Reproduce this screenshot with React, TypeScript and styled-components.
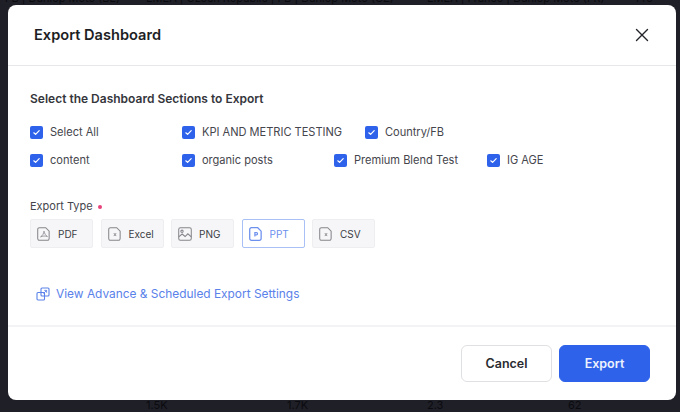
import React from "react";
import styled, { createGlobalStyle } from "styled-components";

const GlobalStyle = createGlobalStyle`
  html, body {
    margin: 0;
    padding: 0;
    width: 680px;
    height: 412px;
    overflow: hidden;
    background: #1f1f27;
    font-family: Inter, "Liberation Sans", sans-serif;
  }
`;

const Page = styled.div`
  position: relative;
  width: 680px;
  height: 412px;
  padding: 5px 0 0 8px;
  box-sizing: border-box;
  overflow: hidden;
  background: #1f1f27;
`;

const BackdropText = styled.span<{ $x: number; $y: number }>`
  position: absolute;
  left: ${(p) => p.$x}px;
  top: ${(p) => p.$y}px;
  font-size: 11px;
  line-height: 14px;
  color: #0b0b0f;
  white-space: nowrap;
`;

const Modal = styled.div`
  position: relative;
  width: 668px;
  height: 395px;
  background: #fff;
  border-radius: 8px;
  display: flex;
  flex-direction: column;
`;

const Header = styled.header`
  height: 61px;
  flex: none;
  box-sizing: border-box;
  padding: 0 26px;
  display: flex;
  align-items: center;
  justify-content: space-between;
  border-bottom: 1px solid #e6e7ea;
`;

const Title = styled.h2`
  margin: 0;
  font-size: 14.6px;
  font-weight: 600;
  color: #1d1e24;
`;

const CloseButton = styled.button`
  width: 16px;
  height: 16px;
  padding: 0;
  border: 0;
  background: none;
  display: flex;
  color: #23242a;
`;

const Body = styled.div`
  flex: 1;
  padding: 25px 22px 0;
  display: flex;
  flex-direction: column;
`;

const SectionTitle = styled.h3`
  margin: 0 0 19px;
  font-size: 12px;
  line-height: 15px;
  font-weight: 600;
  color: #35363c;
`;

const CheckRow = styled.div`
  display: flex;
  height: 14px;
  margin-bottom: 14px;
`;

const CheckItem = styled.label<{ $width?: number }>`
  display: flex;
  align-items: center;
  gap: 7px;
  width: ${(p) => (p.$width ? `${p.$width}px` : "auto")};
  font-size: 11.05px;
  color: #45464d;
  white-space: nowrap;
`;

const CheckBox = styled.span`
  width: 13px;
  height: 13px;
  flex: none;
  border-radius: 2px;
  background: #2e62ea;
  display: flex;
  align-items: center;
  justify-content: center;
`;

const FieldLabel = styled.div`
  margin-top: 18px;
  font-size: 11px;
  line-height: 14px;
  color: #45464d;
  display: flex;
  align-items: center;
  gap: 5px;
`;

const RequiredDot = styled.span`
  width: 4px;
  height: 4px;
  border-radius: 50%;
  background: #e8437a;
  margin-top: 2px;
`;

const TypeRow = styled.div`
  display: flex;
  gap: 7.5px;
  margin-top: 6px;
`;

const TypeButton = styled.div<{ $active?: boolean }>`
  width: 63px;
  height: 29px;
  box-sizing: border-box;
  padding-left: 5px;
  display: flex;
  align-items: center;
  gap: 6px;
  border-radius: 2px;
  font-size: 10px;
  background: ${(p) => (p.$active ? "#fff" : "#f6f6f8")};
  border: 1px solid ${(p) => (p.$active ? "#a8c0f5" : "#eeeef1")};
  color: ${(p) => (p.$active ? "#6c90ee" : "#3c3d44")};
`;

const IconSvg = styled.svg<{ $active?: boolean }>`
  flex: none;
  opacity: ${(p) => (p.$active ? 1 : 0.6)};
`;

const LinkRow = styled.a`
  margin: 38px 0 0 6px;
  display: flex;
  align-items: center;
  gap: 6px;
  font-size: 11.9px;
  line-height: 16px;
  color: #5a82ea;
`;

const Footer = styled.footer`
  height: 75px;
  flex: none;
  box-sizing: border-box;
  padding: 18px 26px 0 0;
  display: flex;
  justify-content: flex-end;
  gap: 7px;
  border-top: 2px solid #f3f3f5;
`;

const ActionButton = styled.button<{ $primary?: boolean }>`
  width: 91px;
  height: 37px;
  box-sizing: border-box;
  border-radius: 6px;
  font-family: inherit;
  font-size: 12.5px;
  font-weight: 600;
  border: 1px solid ${(p) => (p.$primary ? "#2e62ea" : "#dfe0e3")};
  background: ${(p) => (p.$primary ? "#2e62ea" : "#fff")};
  color: ${(p) => (p.$primary ? "#eef2fd" : "#2a2b31")};
`;

const CheckMark = () => (
  <svg width="9" height="9" viewBox="0 0 9 9" fill="none">
    <path d="M1.8 4.8 3.6 6.4 7.2 2.6" stroke="#fff" strokeWidth="1.2" strokeLinecap="round" strokeLinejoin="round" />
  </svg>
);

const FileIcon = ({ kind }: { kind: string }) => (
  <IconSvg $active={kind === "P"} width="16" height="16" viewBox="0 0 14 14" fill="none" stroke="currentColor" strokeWidth={kind === "P" ? 1.1 : 0.9}>
    {kind === "img" ? (
      <>
        <rect x="1.5" y="1.5" width="11" height="11" rx="1.5" />
        <circle cx="4.4" cy="4.6" r="1" />
        <path d="M1.5 9.5 4.5 7l2.6 2.2L9.5 6.8l3 2.8" />
      </>
    ) : (
      <>
        <path d="M3 1.5h5.5l3 3V11a1.5 1.5 0 0 1-1.5 1.5H3A1.5 1.5 0 0 1 1.5 11V3A1.5 1.5 0 0 1 3 1.5Z" />
        {kind === "pdf" && <path d="M7 4.5c-.2 2-1.2 4-3 5 1.8-.8 4-1 6-.3-1.4-.9-2.7-2.6-3-4.7Z" strokeWidth=".7" />}
        {kind === "x" && <path d="m6 6.2 2 2.6m0-2.6-2 2.6" strokeWidth=".8" />}
        {kind === "P" && <path d="M6 9.2V5.8h1.4a1 1 0 0 1 0 2H6" strokeWidth="1" />}
      </>
    )}
  </IconSvg>
);

const ExternalIcon = () => (
  <svg width="14" height="14" viewBox="0 0 14 14" fill="none" stroke="#5a82ea" strokeWidth="1.1">
    <rect x="5" y="1" width="8" height="8" rx="1" />
    <rect x="1" y="5.5" width="7.5" height="7.5" rx="1" />
    <path d="M7.5 6.5 10.5 3.5M8.3 3.4h2.3v2.3" strokeWidth=".9" />
  </svg>
);

const rows = [
  [
    { label: "Select All", width: 152 },
    { label: "KPI AND METRIC TESTING", width: 183 },
    { label: "Country/FB" },
  ],
  [
    { label: "content", width: 152 },
    { label: "organic posts", width: 152 },
    { label: "Premium Blend Test", width: 153 },
    { label: "IG AGE" },
  ],
];

const exportTypes = [
  { label: "PDF", icon: "pdf" },
  { label: "Excel", icon: "x" },
  { label: "PNG", icon: "img" },
  { label: "PPT", icon: "P", active: true },
  { label: "CSV", icon: "x" },
];

export default function App() {
  return (
    <Page>
      <GlobalStyle />
      <BackdropText $x={5} $y={-9}>FB | Dunlop Moto (BE)</BackdropText>
      <BackdropText $x={146} $y={-9}>EMEA | Czech Republic | FB | Dunlop Moto (CZ)</BackdropText>
      <BackdropText $x={427} $y={-9}>EMEA | France | Dunlop Moto (FR)</BackdropText>
      <BackdropText $x={636} $y={-9}>Fro</BackdropText>
      <BackdropText $x={146} $y={398}>1.5K</BackdropText>
      <BackdropText $x={287} $y={398}>1.7K</BackdropText>
      <BackdropText $x={427} $y={398}>2.3</BackdropText>
      <BackdropText $x={568} $y={398}>62</BackdropText>
      <Modal>
        <Header>
          <Title>Export Dashboard</Title>
          <CloseButton aria-label="Close">
            <svg width="16" height="16" viewBox="0 0 16 16" fill="none" stroke="currentColor" strokeWidth="1.4" strokeLinecap="round">
              <path d="M2.5 2.5l11 11M13.5 2.5l-11 11" />
            </svg>
          </CloseButton>
        </Header>
        <Body>
          <SectionTitle>Select the Dashboard Sections to Export</SectionTitle>
          {rows.map((row, i) => (
            <CheckRow key={i}>
              {row.map((item) => (
                <CheckItem key={item.label} $width={item.width}>
                  <CheckBox>
                    <CheckMark />
                  </CheckBox>
                  {item.label}
                </CheckItem>
              ))}
            </CheckRow>
          ))}
          <FieldLabel>
            Export Type <RequiredDot />
          </FieldLabel>
          <TypeRow>
            {exportTypes.map((t) => (
              <TypeButton key={t.label} $active={t.active}>
                <FileIcon kind={t.icon} />
                {t.label}
              </TypeButton>
            ))}
          </TypeRow>
          <LinkRow>
            <ExternalIcon />
            View Advance &amp; Scheduled Export Settings
          </LinkRow>
        </Body>
        <Footer>
          <ActionButton>Cancel</ActionButton>
          <ActionButton $primary>Export</ActionButton>
        </Footer>
      </Modal>
    </Page>
  );
}
